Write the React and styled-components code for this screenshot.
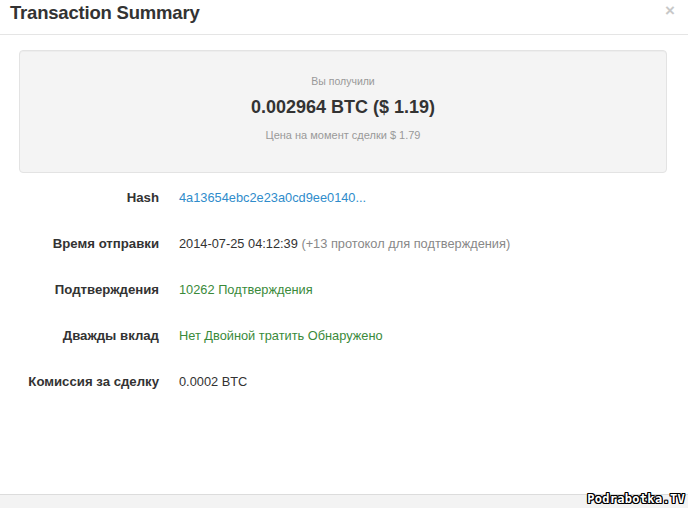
import React from "react";
import styled, { createGlobalStyle } from "styled-components";

const GlobalStyle = createGlobalStyle`
  html, body {
    margin: 0;
    padding: 0;
    background: #fff;
    font-family: "Liberation Sans", Arial, sans-serif;
  }
`;

const Modal = styled.div`
  position: relative;
  width: 688px;
  height: 508px;
  display: flex;
  flex-direction: column;
  background: #fff;
  overflow: hidden;
`;

const Header = styled.div`
  display: flex;
  align-items: flex-start;
  justify-content: space-between;
  height: 35px;
  padding: 0 10px;
  border-bottom: 1px solid #e5e5e5;
  box-sizing: border-box;
`;

const Title = styled.h3`
  margin: 2px 0 0;
  font-size: 18.5px;
  font-weight: 700;
  color: #333;
  letter-spacing: -0.2px;
`;

const Close = styled.span`
  margin-top: 1px;
  margin-right: 3px;
  font-size: 17px;
  font-weight: 700;
  color: #c8c8c8;
`;

const Body = styled.div`
  flex: 1;
  padding: 15px 21px 0 19px;
`;

const Well = styled.div`
  height: 123px;
  box-sizing: border-box;
  display: flex;
  flex-direction: column;
  align-items: center;
  padding-top: 24px;
  background: #f4f4f4;
  border: 1px solid #e3e3e3;
  border-radius: 4px;
  box-shadow: inset 0 1px 1px rgba(0, 0, 0, 0.03);
`;

const Muted = styled.div`
  font-size: ${(p) => p.size || 10.5}px;
  color: #999;
  margin-top: ${(p) => p.gap || 0}px;
`;

const Amount = styled.div`
  margin-top: 10px;
  font-size: 18px;
  font-weight: 700;
  color: #333;
`;

const Rows = styled.div`
  display: flex;
  flex-direction: column;
  gap: 31px;
  margin-top: 17px;
`;

const Row = styled.div`
  display: flex;
  align-items: baseline;
  font-size: 13.2px;
  line-height: 15px;
`;

const Label = styled.div`
  width: 140px;
  text-align: right;
  font-weight: 700;
  color: #333;
`;

const Value = styled.div`
  margin-left: 20px;
  font-size: 12.8px;
  color: ${(p) => p.color || "#333"};
`;

const Note = styled.span`
  color: #888;
`;

const Footer = styled.div`
  height: 13px;
  background: #f3f3f3;
  border-top: 1px solid #dcdcdc;
`;

const Watermark = styled.div`
  position: absolute;
  right: 3px;
  bottom: 2px;
  font-family: "DejaVu Sans Mono", monospace;
  font-size: 12px;
  font-weight: 700;
  color: #fff;
  letter-spacing: 0.3px;
  text-shadow: -1px -1px 0 #000, 1px -1px 0 #000, -1px 1px 0 #000,
    1px 1px 0 #000, 0 1px 0 #000, 0 -1px 0 #000, 1px 0 0 #000, -1px 0 0 #000;
`;

const rows = [
  { label: "Hash", value: "4a13654ebc2e23a0cd9ee0140...", color: "#2f8ccb" },
  {
    label: "Время отправки",
    value: "2014-07-25 04:12:39",
    note: " (+13 протокол для подтверждения)",
  },
  { label: "Подтверждения", value: "10262 Подтверждения", color: "#3a8a3a" },
  {
    label: "Дважды вклад",
    value: "Нет Двойной тратить Обнаружено",
    color: "#3a8a3a",
  },
  { label: "Комиссия за сделку", value: "0.0002 BTC" },
];

const App = () => {
  return (
    <Modal>
      <GlobalStyle />
      <Header>
        <Title>Transaction Summary</Title>
        <Close>×</Close>
      </Header>
      <Body>
        <Well>
          <Muted>Вы получили</Muted>
          <Amount>0.002964 BTC ($ 1.19)</Amount>
          <Muted gap={11} size={11}>
            Цена на момент сделки $ 1.79
          </Muted>
        </Well>
        <Rows>
          {rows.map((r) => (
            <Row key={r.label}>
              <Label>{r.label}</Label>
              <Value color={r.color}>
                {r.value}
                {r.note && <Note>{r.note}</Note>}
              </Value>
            </Row>
          ))}
        </Rows>
      </Body>
      <Footer />
      <Watermark>Podrabotka.TV</Watermark>
    </Modal>
  );
};

export default App;
